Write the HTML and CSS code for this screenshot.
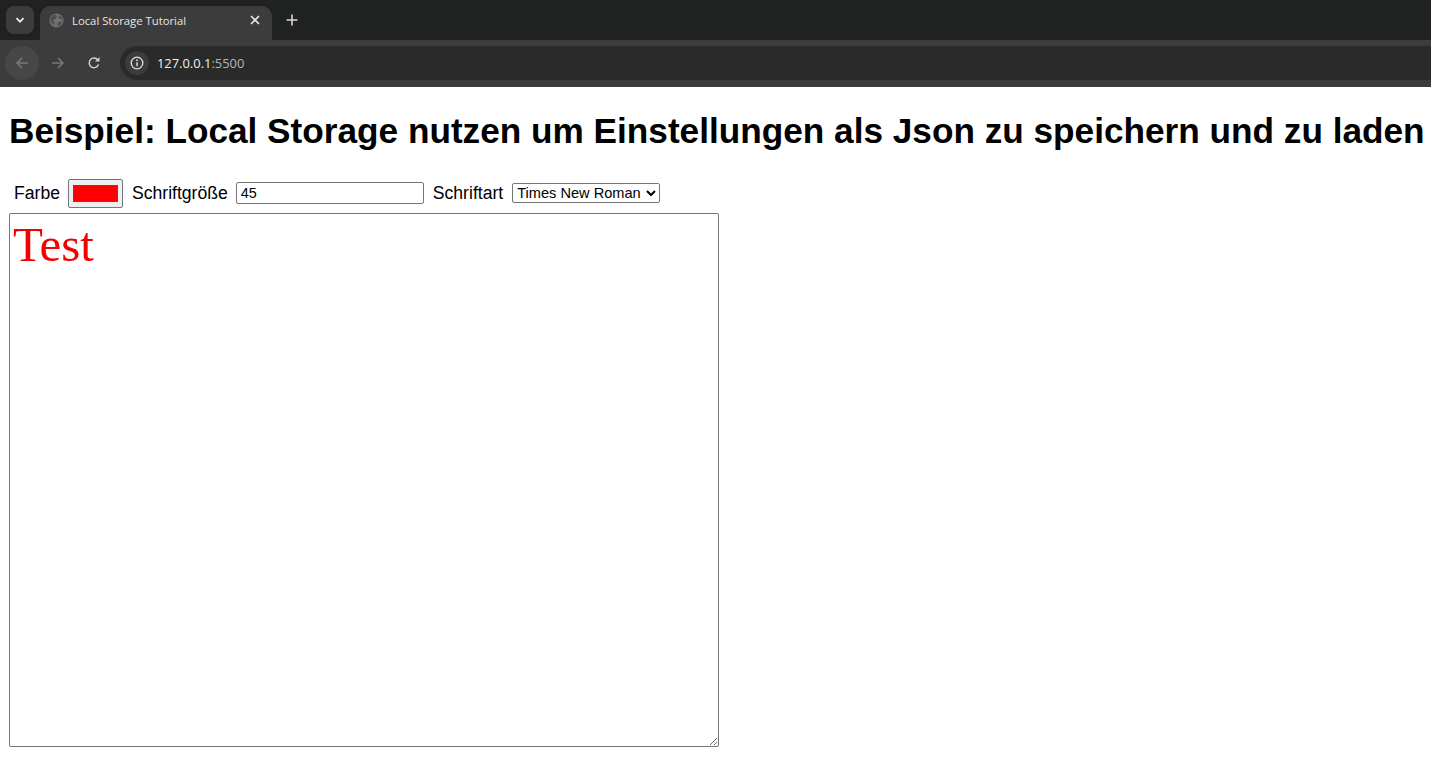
FILE: index.html
```html
<!DOCTYPE html>
<html lang="de">
<head>
<meta charset="utf-8">
<title>Local Storage Tutorial</title>
<link rel="stylesheet" href="styles.css">
</head>
<body>
<header class="browser">
  <div class="tabstrip">
    <button class="tab-search" aria-label="Tabs suchen">
      <svg width="12" height="12" viewBox="0 0 12 12"><path d="M2.500 4.200 6 7.700l3.500-3.500" fill="none" stroke="#e8e8e8" stroke-width="1.800"/></svg>
    </button>
    <div class="tab">
      <svg class="favicon" width="15" height="15" viewBox="0 0 16 16"><circle cx="8" cy="8" r="7.500" fill="#6f7275"/><path d="M4 2.500 7.500 1.500 8.500 4.500 6.500 7 4 7.500 6 10.500 5.500 13 2 9.500 1.500 6ZM11 2l3 3 .5 2-3-.5L10 4ZM10 9.500l4-.5-1.500 3.500L9.500 14.500 9 12Z" fill="#4c4e50"/></svg>
      <span class="tab-title">Local Storage Tutorial</span>
      <svg class="tab-close" width="10" height="10" viewBox="0 0 10 10"><path d="M1 1l8 8M9 1l-8 8" stroke="#e8e8e8" stroke-width="1.600"/></svg>
    </div>
    <svg class="new-tab" width="12" height="12" viewBox="0 0 12 12"><path d="M6 .5v11M.5 6h11" stroke="#d8d8d8" stroke-width="1.600"/></svg>
  </div>
  <div class="toolbar">
    <span class="nav-btn back">
      <svg width="14" height="14" viewBox="0 0 14 14"><path d="M13 7H2M7 2 2 7l5 5" fill="none" stroke="#77797a" stroke-width="1.500"/></svg>
    </span>
    <span class="nav-btn">
      <svg width="14" height="14" viewBox="0 0 14 14"><path d="M1 7h11M7 2l5 5-5 5" fill="none" stroke="#77797a" stroke-width="1.500"/></svg>
    </span>
    <span class="nav-btn">
      <svg width="14" height="14" viewBox="0 0 14 14"><path d="M11.500 8.500A4.800 4.800 0 1 1 10.800 4" fill="none" stroke="#d0d0d0" stroke-width="1.500"/><path d="M12.500 1v4.500H8" fill="#d0d0d0"/></svg>
    </span>
    <div class="omnibox">
      <span class="site-info">
        <svg width="14" height="14" viewBox="0 0 14 14"><circle cx="7" cy="7" r="5.800" fill="none" stroke="#e0e0e0" stroke-width="1.300"/><path d="M7 6.200v4" stroke="#e0e0e0" stroke-width="1.400"/><circle cx="7" cy="4.200" r=".9" fill="#e0e0e0"/></svg>
      </span>
      <span class="url">127.0.0.1<span class="url-port">:5500</span></span>
    </div>
  </div>
</header>
<main class="page">
  <h1 class="title">Beispiel: Local Storage nutzen um Einstellungen als Json zu speichern und zu laden</h1>
  <div class="settings">
    <label class="field-label" for="farbe">Farbe</label>
    <input class="color-input" id="farbe" type="color" value="#ff0000">
    <label class="field-label" for="groesse">Schriftgröße</label>
    <input class="size-input" id="groesse" type="text" value="45">
    <label class="field-label" for="art">Schriftart</label>
    <select class="font-select" id="art">
      <option>Times New Roman</option>
      <option>Arial</option>
    </select>
  </div>
  <textarea class="editor">Test</textarea>
</main>
</body>
</html>
```
FILE: styles.css
```css
* { box-sizing: border-box; }
html, body { margin: 0; height: 100%; }
body {
  background: #fff;
  font-family: "Liberation Sans", Arial, sans-serif;
  overflow: hidden;
}
.browser { height: 87px; display: flex; flex-direction: column; }
.tabstrip {
  height: 40px;
  background: #202221;
  display: flex;
  align-items: flex-end;
  padding-left: 6px;
}
.tab-search {
  width: 28px;
  height: 28px;
  margin-bottom: 6px;
  border: 0;
  padding: 0;
  border-radius: 8px;
  background: #3c3c3c;
  display: flex;
  align-items: center;
  justify-content: center;
}
.tab {
  width: 232px;
  height: 34px;
  margin-left: 6px;
  background: #3c3c3c;
  border-radius: 10px 10px 0 0;
  display: flex;
  align-items: center;
  padding: 0 12px 6px 9px;
}
.favicon { flex: none; }
.tab-title {
  flex: 1;
  margin-left: 8px;
  color: #e6e6e6;
  font: 11.300px "Open Sans", "Liberation Sans", sans-serif;
  white-space: nowrap;
}
.new-tab { margin: 0 0 14px 14px; }
.toolbar {
  flex: 1;
  background: #3c3c3c;
  display: flex;
  align-items: center;
  padding: 6px 0 7px 5px;
}
.nav-btn {
  width: 34px;
  height: 34px;
  margin-right: 2px;
  border-radius: 50%;
  display: flex;
  align-items: center;
  justify-content: center;
}
.nav-btn.back { background: #474747; }
.omnibox {
  flex: 1;
  height: 34px;
  margin-left: 7px;
  background: #2a2a2a;
  border-radius: 17px 0 0 17px;
  display: flex;
  align-items: center;
  padding-left: 5px;
}
.site-info {
  width: 24px;
  height: 24px;
  border-radius: 50%;
  background: #3c3c3c;
  display: flex;
  align-items: center;
  justify-content: center;
}
.url {
  margin-left: 8px;
  color: #f0f0f0;
  font: 12.900px "Open Sans", "Liberation Sans", sans-serif;
}
.url-port { color: #b5b5b5; }
.page { padding: 0 0 0 9px; }
.title {
  margin: 23px 0 0;
  font-size: 35.200px;
  line-height: 41px;
  white-space: nowrap;
  font-weight: 700;
  color: #000;
}
.settings {
  display: flex;
  align-items: center;
  height: 29px;
  margin-top: 28px;
  padding-left: 5px;
}
.field-label { font-size: 17.600px; color: #000; white-space: nowrap; }
.color-input {
  width: 55px;
  height: 29px;
  margin: 0 9px 0 8px;
  padding: 5px 4px 5px;
  background: #efefef;
  border: 1px solid #767676;
  border-radius: 2px;
}
.color-input::-webkit-color-swatch-wrapper { padding: 0; }
.color-input::-webkit-color-swatch { border: 1px solid #8a3a3a; }
.size-input {
  width: 188px;
  height: 22px;
  margin: 0 9px 2px 8px;
  padding: 1px 4px;
  border: 1px solid #767676;
  border-radius: 2px;
  font: 14.400px "Liberation Sans", Arial, sans-serif;
}
.font-select {
  width: 148px;
  height: 20px;
  margin: 0 0 2px 9px;
  padding: 0;
  font: 14.600px "Liberation Sans", Arial, sans-serif;
  background: #fff;
  border: 1px solid #767676;
  border-radius: 2px;
  color: #000;
}
.editor {
  display: block;
  width: 710px;
  height: 534px;
  margin-top: 5px;
  padding: 2px 3px;
  border: 1px solid #767676;
  border-radius: 2px;
  color: #f50000;
  font: 49px "Liberation Serif", "Times New Roman", serif;
}
```
